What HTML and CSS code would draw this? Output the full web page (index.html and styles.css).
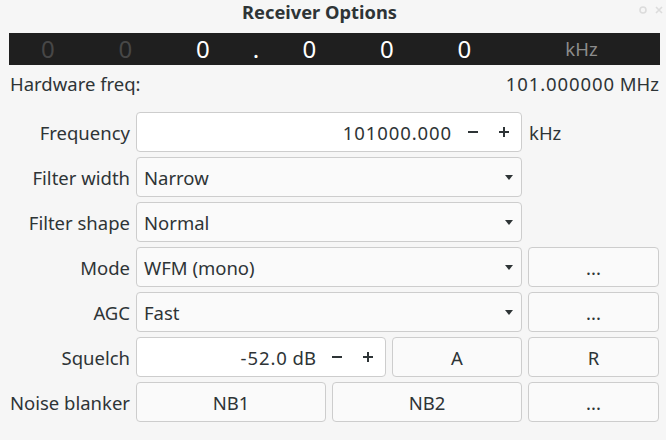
FILE: index.html
```html
<!DOCTYPE html>
<html>
<head>
<meta charset="utf-8">
<link rel="stylesheet" href="styles.css">
</head>
<body>
<div class="window">
  <header class="titlebar">
    <span class="title">Receiver Options</span>
    <span class="wm">
      <svg width="8" height="8" viewBox="0 0 8 8"><circle cx="4" cy="4" r="3" fill="none" stroke="#dcdcdc" stroke-width="1.6"/></svg>
      <svg width="8" height="8" viewBox="0 0 8 8"><path d="M1 1L7 7M7 1L1 7" stroke="#dcdcdc" stroke-width="1.6"/></svg>
    </span>
  </header>

  <div class="display">
    <span class="digit dim">0</span>
    <span class="digit dim">0</span>
    <span class="digit">0</span>
    <span class="dot">.</span>
    <span class="digit">0</span>
    <span class="digit">0</span>
    <span class="digit">0</span>
    <span class="unit">kHz</span>
  </div>

  <div class="hw">
    <span>Hardware freq:</span>
    <span><span class="num">101.000000</span> MHz</span>
  </div>

  <div class="form">
    <label class="lbl">Frequency</label>
    <div class="entry">
      <span class="value num">101000.000</span>
      <span class="spin"><svg width="10" height="10" viewBox="0 0 10 10"><rect x="0" y="4" width="10" height="2" fill="#2e3436"/></svg></span>
      <span class="spin"><svg width="10" height="10" viewBox="0 0 10 10"><rect x="0" y="4" width="10" height="2" fill="#2e3436"/><rect x="4" y="0" width="2" height="10" fill="#2e3436"/></svg></span>
    </div>
    <span class="unit-lbl">kHz</span>

    <label class="lbl">Filter width</label>
    <div class="combo"><span>Narrow</span><svg class="arrow" width="8" height="5" viewBox="0 0 8 5"><path d="M0 0H8L4 5Z" fill="#2e3436"/></svg></div>
    <span></span>

    <label class="lbl">Filter shape</label>
    <div class="combo"><span>Normal</span><svg class="arrow" width="8" height="5" viewBox="0 0 8 5"><path d="M0 0H8L4 5Z" fill="#2e3436"/></svg></div>
    <span></span>

    <label class="lbl">Mode</label>
    <div class="combo"><span>WFM (mono)</span><svg class="arrow" width="8" height="5" viewBox="0 0 8 5"><path d="M0 0H8L4 5Z" fill="#2e3436"/></svg></div>
    <button class="btn">...</button>

    <label class="lbl">AGC</label>
    <div class="combo"><span>Fast</span><svg class="arrow" width="8" height="5" viewBox="0 0 8 5"><path d="M0 0H8L4 5Z" fill="#2e3436"/></svg></div>
    <button class="btn">...</button>

    <label class="lbl">Squelch</label>
    <div class="split">
      <div class="entry">
        <span class="value"><span class="num">-52.0</span> dB</span>
        <span class="spin"><svg width="10" height="10" viewBox="0 0 10 10"><rect x="0" y="4" width="10" height="2" fill="#2e3436"/></svg></span>
        <span class="spin"><svg width="10" height="10" viewBox="0 0 10 10"><rect x="0" y="4" width="10" height="2" fill="#2e3436"/><rect x="4" y="0" width="2" height="10" fill="#2e3436"/></svg></span>
      </div>
      <button class="btn fixed">A</button>
    </div>
    <button class="btn">R</button>

    <label class="lbl">Noise blanker</label>
    <div class="halves">
      <button class="btn">NB1</button>
      <button class="btn">NB2</button>
    </div>
    <button class="btn">...</button>
  </div>
</div>
</body>
</html>
```

FILE: styles.css
```css
* { box-sizing: border-box; }

html, body {
  margin: 0;
  padding: 0;
  background: #f6f6f6;
}

body {
  font-family: "Noto Sans", "Open Sans", sans-serif;
  font-size: 18.5px;
  color: #2e3436;
  width: 666px;
  height: 440px;
  overflow: hidden;
}

.window {
  padding: 0 6px 0 9px;
}

.titlebar {
  height: 33px;
  position: relative;
  display: flex;
  justify-content: center;
  padding-right: 30px;
}

.title {
  font-weight: bold;
  font-size: 18.3px;
  line-height: 23px;
}

.wm {
  position: absolute;
  right: -3px;
  top: 6px;
  display: flex;
  gap: 8px;
}

.display {
  height: 32px;
  background: #1f1f1f;
  display: grid;
  grid-template-columns: 77.5px 77.5px 77.5px 29px 77.5px 77.5px 77.5px 1fr;
  align-items: center;
  font-size: 24px;
  line-height: 32px;
  color: #ffffff;
  text-align: center;
}

.digit.dim { color: #474747; }

.unit {
  font-size: 18.5px;
  color: #8c8c8c;
}

.hw {
  height: 36px;
  display: flex;
  justify-content: space-between;
  align-items: center;
  padding: 0 1px;
}

.num { letter-spacing: 0.9px; }

.form {
  margin-top: 11px;
  display: grid;
  grid-template-columns: 121px 386px 131px;
  grid-auto-rows: 40px;
  column-gap: 6px;
  row-gap: 5px;
}

.lbl {
  align-self: center;
  text-align: right;
  white-space: nowrap;
}

.unit-lbl {
  align-self: center;
  padding-left: 1px;
}

.entry, .combo, .btn {
  height: 40px;
  border: 1px solid #cdcdcd;
  border-radius: 4px;
  font: inherit;
  color: inherit;
}

.entry {
  background: #ffffff;
  display: flex;
  align-items: center;
  padding-right: 2px;
}

.entry .value {
  flex: 1;
  text-align: right;
  padding-right: 5px;
}

.spin {
  width: 31px;
  display: flex;
  justify-content: center;
  align-items: center;
}

.combo {
  background: #fafafa;
  display: flex;
  align-items: center;
  justify-content: space-between;
  padding: 0 8px 0 7px;
}

.btn {
  background: #fafafa;
  padding: 0;
  margin: 0;
  text-align: center;
}

.split {
  display: flex;
  gap: 6px;
}

.split .entry { flex: 1; }
.btn.fixed { width: 130px; flex: none; }

.halves {
  display: grid;
  grid-template-columns: 1fr 1fr;
  gap: 6px;
}
```
